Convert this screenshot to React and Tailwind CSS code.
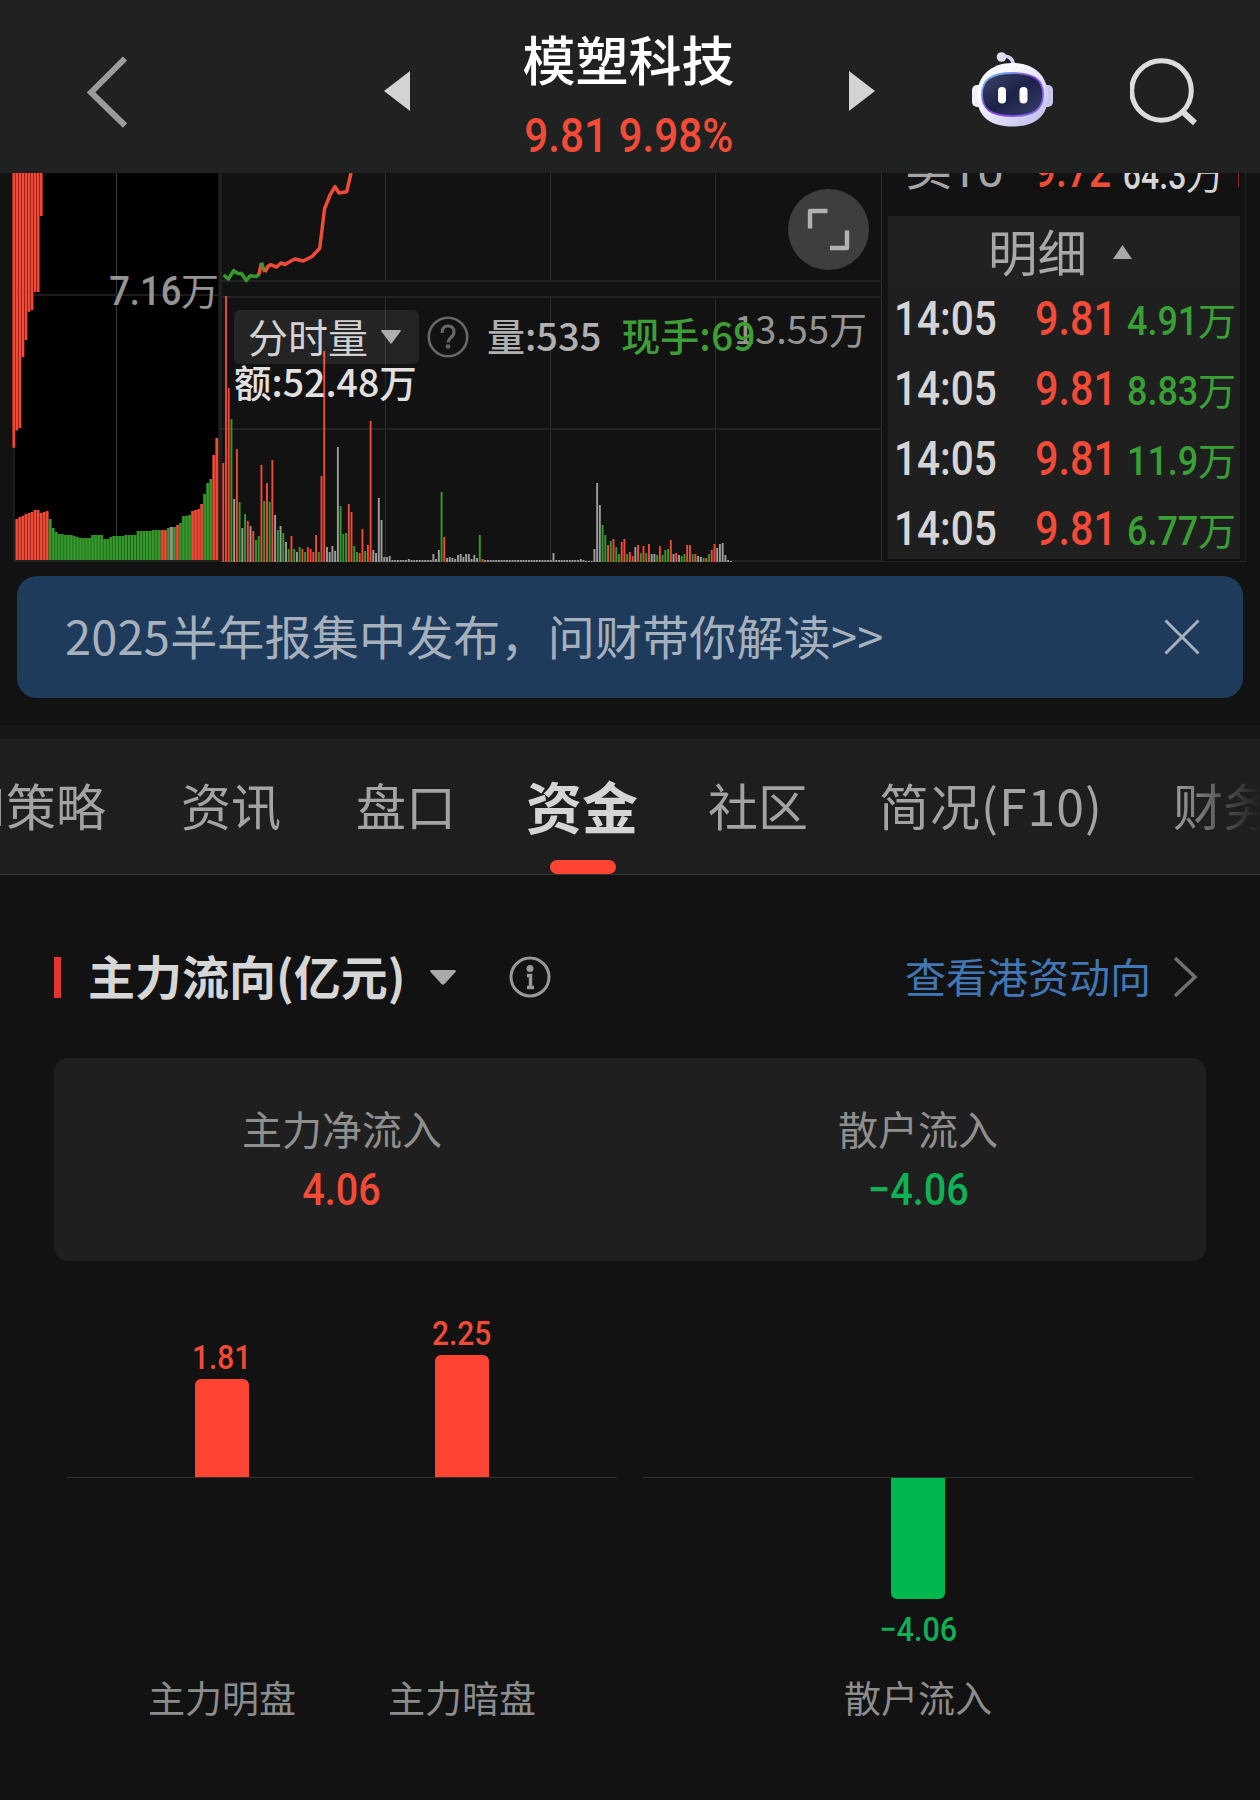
import React from 'react';

const RED = '#f04a38';
const GREEN = '#359a2c';
const GRAY = '#9c9c9c';
const COLORS = { r: RED, g: GREEN, w: GRAY };

// hanging bars at the left edge, bottom y of each one
const topBars = [447.7, 430.3, 428, 357, 340, 311.7, 310, 292, 292, 216];

// [color, heights...]
const leftGroups = [
  ['r', 42, 44, 45, 47, 48, 49, 51, 51, 48, 49, 50],
  ['g', 42, 33, 29, 27, 27, 26, 26, 26, 25, 24, 23, 23, 23, 23, 26, 26, 26, 26, 22, 22, 24, 25, 25, 25, 25, 26, 26, 26, 26, 30, 30, 30, 30, 30, 31, 31, 31],
  ['r', 31, 31],
  ['g', 33],
  ['w', 34],
  ['g', 34],
  ['r', 36],
  ['g', 38, 45, 45, 46],
  ['r', 50, 51, 52, 57],
  ['g', 67, 78, 82],
  ['r', 106, 123],
];
const leftBars = leftGroups.flatMap(([c, ...hs]) => hs.map((h) => ({ c, h })));

const volumes = (
  'r99 r266 r174 g143 w63 r113 g60 w34 g48 r41 w36 r31 g22 g26 r97 g61 r79 g60 r102 w47 ' +
  'g32 w36 g29 w20 g13 r26 g13 w10 g15 r13 g10 r15 r13 r10 r27 g10 r86 r211 w15 w10 ' +
  'w16 w11 w115 g56 g28 g29 r58 r50 g16 g10 r9 r33 g11 r17 r141 w12 w9 w64 w42 w5 ' +
  'w5 w6 w2 w2 w2 w2 w2 w2 w3 w2 w2 w2 w2 w2 w2 w2 w2 w8 w3 w12 ' +
  'g70 r25 w4 w5 w4 w3 w7 w8 w5 w8 w8 w3 w7 w4 g27 r3 w2 w2 w2 w2 ' +
  'w2 w2 w2 w2 w2 w2 w2 w2 w2 w2 w2 w2 w2 w2 w2 w2 w2 w2 w2 w2 ' +
  'w2 w9 w2 w2 w2 w2 w2 w2 w2 w2 w2 w3 w2 w1 w1 w1 w13 w79 w57 g37 ' +
  'g27 r17 g21 r23 g15 g8 r20 r23 g8 r10 r6 w15 r17 g9 r16 g9 r18 w8 w8 g7 ' +
  'r16 g7 g12 g13 r22 w8 r9 w7 g6 g8 r17 r17 g8 r8 w6 w5 g4 r4 g8 r12 ' +
  'r18 w14 w18 w19 w7 w2 w1'
).split(' ').map((s) => ({ c: s[0], h: Number(s.slice(1)) }));

const trades = ['4.91', '8.83', '11.9', '6.77'];

const Num = ({ children, className = '' }) => (
  <span className={`inline-block font-[Roboto] ${className}`}>{children}</span>
);

const Robot = () => (
  <svg className="mt-[7px] h-[76px] w-[82px]" viewBox="0 0 82 76">
    <defs>
      <linearGradient id="shell" x1="0" y1="0" x2="1" y2="1">
        <stop offset="0.3" stopColor="#fbfaff" />
        <stop offset="1" stopColor="#b9b6ea" />
      </linearGradient>
      <linearGradient id="rim" x1="0" y1="0" x2="1" y2="1">
        <stop offset="0" stopColor="#6fd0f0" />
        <stop offset="0.5" stopColor="#8a3fe0" />
        <stop offset="1" stopColor="#6f6cf0" />
      </linearGradient>
      <linearGradient id="face" x1="0" y1="0" x2="1" y2="1">
        <stop offset="0" stopColor="#3f4669" />
        <stop offset="0.5" stopColor="#1b2147" />
        <stop offset="1" stopColor="#3a4068" />
      </linearGradient>
    </defs>
    <path d="M30 4.500c7-1 11 2 11.500 9" fill="none" stroke="#d6d3f2" strokeWidth="3.5" />
    <circle cx="29.500" cy="5" r="4.800" fill="#dfdcf6" />
    <rect x="0" y="33" width="12" height="22" rx="5" fill="#f1effc" />
    <rect x="69" y="33" width="12" height="22" rx="5" fill="#c9c6f0" />
    <path d="M40.500 11C62 11 76 24 76 44C76 65 62 74.500 40.500 74.500S5 65 5 44C5 24 19 11 40.500 11Z" fill="url(#shell)" />
    <path d="M40.500 21C62 21 71 28 71 42.500S62 64 40.500 64S10 57 10 42.500S19 21 40.500 21Z" fill="url(#face)" stroke="url(#rim)" strokeWidth="1.800" />
    <rect x="26" y="35" width="8" height="16.500" rx="4" fill="#fff" />
    <rect x="47.500" y="35" width="8" height="16.500" rx="4" fill="#fff" />
  </svg>
);

const Header = () => (
  <header className="grid h-[173px] grid-cols-[384px_491px_1fr] items-center bg-[#202221]">
    <svg className="ml-[85px] mt-[11px] h-[72px] w-[44px]" viewBox="0 0 44 72" fill="none" stroke="#9b9b9b" strokeWidth="6">
      <path d="M40 2.500L6 36.500L40 69.500" />
    </svg>
    <div className="flex items-center justify-between">
      <svg className="mt-[9px] h-[40px] w-[26px]" viewBox="0 0 26 40"><path d="M26 0V40L0 20Z" fill="#d3d3d3" /></svg>
      <div className="mr-[2px] mt-[17px] flex flex-col items-center whitespace-nowrap">
        <h1 className="text-[53px] font-medium leading-[66px] text-white">模塑科技</h1>
        <Num className="mt-[15px] scale-x-[0.88] text-[48px] font-medium leading-[60px] text-[#f44a38]">9.81 9.98%</Num>
      </div>
      <svg className="mt-[9px] h-[40px] w-[26px]" viewBox="0 0 26 40"><path d="M0 0V40L26 20Z" fill="#d3d3d3" /></svg>
    </div>
    <div className="flex items-center pl-[97px]">
      <Robot />
      <svg className="ml-[76px] mt-[10px] h-[70px] w-[70px]" viewBox="0 0 70 70" fill="none" stroke="#dcdcdc" strokeWidth="5">
        <circle cx="31.500" cy="33.500" r="29.800" />
        <path d="M53 55L65 66" strokeWidth="6" />
      </svg>
    </div>
  </header>
);

const Chart = () => (
  <svg className="block h-[403px] w-[1260px]" viewBox="0 173 1260 403">
    <rect x="14" y="173" width="204" height="388" fill="#000" />
    <path d="M14 448V561" stroke="#1c1c1c" strokeWidth="2" />
    <path d="M116.500 173V561" stroke="#3a3a3a" />
    <path d="M14 295H219" stroke="#1c1c1c" strokeWidth="2" />
    {topBars.map((y, i) => (
      <g key={i}>
        <rect x={12.3 + i * 3.03} y="173" width="3.100" height={y - 173} fill="#b8281c" />
        <rect x={12.8 + i * 3.03} y="173" width="2.100" height={y - 173} fill={RED} />
      </g>
    ))}
    {leftBars.map((b, i) => (
      <g key={i} fill={COLORS[b.c]}>
        <rect x={15.3 + i * 3.03} y={561 - b.h} width="3.100" height={b.h} opacity="0.7" />
        <rect x={15.8 + i * 3.03} y={561 - b.h} width="2.100" height={b.h} />
      </g>
    ))}

    <g stroke="#2b2b2b" fill="none">
      <path d="M220.500 173V561" stroke="#202020" strokeWidth="3" />
      <path d="M385.500 173V282M550.500 173V282M715.500 173V282M385.500 297V561M550.500 297V561M715.500 297V561" />
      <path d="M881.500 173V561" />
      <path d="M222 281H882M220 297H882M220 429H882M14 561H882" stroke="#232323" strokeWidth="2" />
      <path d="M882 561.500H1245.500V173" stroke="#222" />
    </g>
    {volumes.map((v, i) => (
      <rect key={i} x={222.3 + i * 2.729} y={562 - v.h} width="1.900" height={v.h} fill={COLORS[v.c]} />
    ))}

    <g fill="none" strokeWidth="3.500" strokeLinejoin="round">
      <path stroke={GREEN} d="M223.700 275L228.300 279L233.700 270.700L238 273.500L241.500 273.500L246.300 280.500L250.300 275.700L256.300 276.500L259.500 274" />
      <path stroke={RED} d="M259 274.500L261.300 263" />
      <path stroke={GREEN} d="M261.500 262.500L264.500 272" />
      <path stroke={RED} d="M264.800 272L268 266.500L270.500 264.700L276.700 267L281 263L285 264.500L290 261.500L295 259L303.300 261L312.300 256.300L319.700 248.300L321 238L324.500 209L330 195L335 186.700L339 193L346.700 191.700L348.500 184L351 173" />
    </g>
    <path d="M1238.500 173V187" stroke="#8a2c22" />
  </svg>
);

const OrderPanel = () => (
  <div className="absolute left-[888px] top-0 h-[386px] w-[352px] overflow-hidden">
    <div className="relative h-[43px] overflow-hidden whitespace-nowrap">
      <span className="absolute -top-[38px] left-[17px] text-[47px] leading-[60px] text-[#a5a5a5]">卖</span>
      <Num className="absolute -top-[32px] left-[62px] text-[48px] leading-[60px] text-[#a5a5a5]">10</Num>
      <Num className="absolute -top-[32px] left-[146px] origin-left scale-x-[0.81] text-[48px] font-medium leading-[60px] text-[#f44a38]">9.72</Num>
      <span className="absolute -top-[30px] right-[16px] text-[38px] leading-[60px] text-[#d6d4d4]">
        <Num className="origin-right scale-x-[0.8] text-[40px] font-medium">64.3</Num>万
      </span>
    </div>
    <div className="h-[343px] overflow-hidden bg-[#1f1f1f]">
      <div className="flex h-[68px] items-center bg-[#212121] pl-[100px] pt-[3px] text-[49.5px] text-[#a8a8a8]">
        明细
        <svg className="ml-[26px] h-[14px] w-[19px]" viewBox="0 0 19 14"><path d="M9.500 0L19 14H0Z" fill="#a8a8a8" /></svg>
      </div>
      {trades.map((v) => (
        <div key={v} className="flex h-[70px] items-center pl-[6px] pr-[4px] text-[48px]">
          <Num className="w-[118px] origin-left scale-x-[0.845] font-medium text-[#d6d4d4]">14:05</Num>
          <Num className="ml-[23px] w-[70px] origin-left scale-x-[0.86] font-medium text-[#f44a38]">9.81</Num>
          <span className="flex flex-1 items-baseline justify-end pt-[3px] text-[38px] text-[#38a035]">
            <Num className="origin-right scale-x-[0.9] text-[40px] font-medium">{v}</Num>万
          </span>
        </div>
      ))}
    </div>
  </div>
);

const MarketSection = () => (
  <section className="relative h-[403px] overflow-hidden whitespace-nowrap">
    <Chart />
    <div className="absolute right-[1041px] top-[91px] flex items-baseline text-[38px] leading-[50px] text-[#949494]">
      <Num className="origin-right scale-x-[0.91] text-[40px] font-medium">7.16</Num>万
    </div>

    <div className="absolute right-[393px] top-[130px] text-[38px] leading-[50px] text-[#949494]">13.55万</div>
    <div className="absolute left-[234px] top-[137px] flex h-[54px] items-center">
      <div className="flex h-[54px] w-[185px] items-center rounded-md bg-white/8 pl-[14px] text-[40px] text-[#d2d2d2]">
        <span className="-mt-[3px]">分时量</span>
        <svg className="ml-[13px] h-[14px] w-[20px]" viewBox="0 0 20 14"><path d="M1 0H19Q20.500 0 19.500 1.500L11 13Q10 14.500 9 13L0.500 1.500Q-0.500 0 1 0" fill="#adadad" /></svg>
      </div>
      <svg className="ml-[8px] h-[42px] w-[42px]" viewBox="0 0 42 42" fill="none" stroke="#686868" strokeWidth="2.600">
        <circle cx="21" cy="21" r="19.200" />
        <path d="M15 17q0-7 6-7t6 6q0 3-3 5.500t-3 5" strokeWidth="3" />
        <circle cx="21" cy="30.500" r="1" />
      </svg>
      <span className="-mt-[5px] ml-[18px] text-[38px] font-medium text-[#b0b0b0]">量:535</span>
      <span className="-mt-[5px] ml-[20px] text-[39px] font-medium text-[#3d9e35]">现手:69</span>
    </div>
    <div className="absolute left-[234px] top-[183px] text-[37.5px] font-medium leading-[50px] text-[#e0e0e0]">额:52.48万</div>

    <button className="absolute left-[788px] top-[16px] flex size-[81px] items-center justify-center rounded-full bg-[#3e3e3e]">
      <svg className="size-[45px]" viewBox="0 0 45 45" fill="none" stroke="#b2b2b2" strokeWidth="4.400" strokeLinejoin="round">
        <path d="M21.500 4H4V21.500M24 41H41V23.500" />
      </svg>
    </button>

    <OrderPanel />
  </section>
);

const Banner = () => (
  <div className="mx-[17px] flex h-[122px] items-center justify-between rounded-[20px] bg-[#1f3b5b] pl-[48px] pr-[43px] text-[47px] text-[#a6b0bd]">
    <span className="-mt-[4px] tracking-[0.2px]">2025半年报集中发布，问财带你解读&gt;&gt;</span>
    <svg className="h-[36px] w-[36px]" viewBox="0 0 36 36" stroke="#a6b0bd" strokeWidth="3"><path d="M1.500 1.500L34.500 34.500M34.500 1.500L1.500 34.500" /></svg>
  </div>
);

const Tabs = () => (
  <nav className="relative mt-[27px] overflow-hidden border-b border-[#343434] border-t-[14px] border-t-[#161616] bg-[#1e1e1e]">
    <div className="-ml-[45px] flex h-[135px] items-center justify-start whitespace-nowrap pb-[4px] text-[50px] text-[#a3a3a3]">
      <span className="w-[51px] shrink-0 text-right">AI</span>
      <span>策略</span>
      <span className="ml-[75px]">资讯</span>
      <span className="ml-[75px]">盘口</span>
      <span className="ml-[70px] text-[56px] font-bold text-[#d5d5d5]">资金</span>
      <span className="ml-[70px]">社区</span>
      <span className="ml-[71px] tracking-[1px]">简况(F10)</span>
      <span className="ml-[70px]">财务</span>
    </div>
    <i className="absolute bottom-0 left-[550px] h-[14px] w-[66px] rounded-full bg-[#ff4433]" />
    <div className="absolute right-0 top-0 h-full w-[90px] bg-linear-to-r from-transparent to-[#1e1e1e]" />
  </nav>
);

const FlowTitle = () => (
  <div className="mt-[67px] flex h-[70px] items-center justify-between pl-[54px] pr-[61px]">
    <div className="flex items-center">
      <i className="h-[41px] w-[7px] bg-[#e23430]" />
      <h2 className="-mt-[4px] ml-[27px] text-[47px] font-bold text-[#d6d6d6]">主力流向(亿元)</h2>
      <svg className="ml-[24px] h-[15px] w-[26px]" viewBox="0 0 26 15"><path d="M1 0H25Q26.500 0.500 25.500 2L14.500 14Q13 15.500 11.500 14L0.500 2Q-0.500 0.500 1 0" fill="#a9a9a9" /></svg>
      <svg className="ml-[53px] h-[42px] w-[42px]" viewBox="0 0 42 42" fill="none" stroke="#999" strokeWidth="3">
        <circle cx="21" cy="21" r="19" />
        <path d="M18 19.500H21.500V31.500M18 31.500H25" strokeWidth="3.400" />
        <circle cx="21" cy="12.500" r="3.500" fill="#999" stroke="none" />
      </svg>
    </div>
    <a className="flex items-center text-[41px] text-[#4277b6]">
      <span className="-mt-[3px]">查看港资动向</span>
      <svg className="ml-[22px] h-[42px] w-[26px]" viewBox="0 0 26 42" fill="none" stroke="#707070" strokeWidth="3.500"><path d="M2 2L22 21L2 40" /></svg>
    </a>
  </div>
);

const Summary = () => (
  <div className="mx-[54px] mt-[46px] grid h-[203px] grid-cols-2 rounded-[14px] bg-[#1f1f1f] pt-[40px] text-center text-[40px] text-[#8f8f8f]">
    <div>
      <p className="leading-[60px]">主力净流入</p>
      <Num className="scale-x-[0.88] text-[45px] font-medium leading-[60px] text-[#f44a38]">4.06</Num>
    </div>
    <div>
      <p className="leading-[60px]">散户流入</p>
      <Num className="scale-x-[0.88] text-[45px] font-medium leading-[60px] text-[#10b156]">−4.06</Num>
    </div>
  </div>
);

const flows = [
  { label: '主力明盘', value: '1.81', height: 98 },
  { label: '主力暗盘', value: '2.25', height: 122 },
];

const FlowBars = () => (
  <div className="mt-[39px] grid grid-cols-[550px_550px] gap-x-[26px] pl-[67px] text-[34px]">
    <div className="flex h-[178px] items-end gap-[40px] border-b border-[#303030] pl-[55px]">
      {flows.map((f) => (
        <div key={f.label} className="flex w-[200px] flex-col items-center text-[#f44a38]">
          <Num className="scale-x-[0.88] font-medium leading-[43px]">{f.value}</Num>
          <i className="w-[54px] rounded-t-md bg-[#ff4433]" style={{ height: f.height }} />
        </div>
      ))}
    </div>
    <div className="border-b border-[#303030]" />
    <div className="flex gap-[40px] pl-[55px] pt-[192px] text-[37px] leading-[54px] text-[#8c8c8c]">
      {flows.map((f) => <span key={f.label} className="w-[200px] text-center">{f.label}</span>)}
    </div>
    <div className="flex flex-col items-center text-[#10b156]">
      <i className="h-[121px] w-[54px] rounded-b-md bg-[#00b750]" />
      <Num className="mt-[8px] scale-x-[0.9] font-medium leading-[44px]">−4.06</Num>
      <span className="mt-[19px] text-[37px] leading-[54px] text-[#8c8c8c]">散户流入</span>
    </div>
  </div>
);

const App = () => (
  <main className="h-[1800px] w-[1260px] overflow-hidden bg-[#121212] font-['Noto_Sans_CJK_SC',sans-serif]">
    <Header />
    <MarketSection />
    <Banner />
    <Tabs />
    <FlowTitle />
    <Summary />
    <FlowBars />
  </main>
);

export default App;
